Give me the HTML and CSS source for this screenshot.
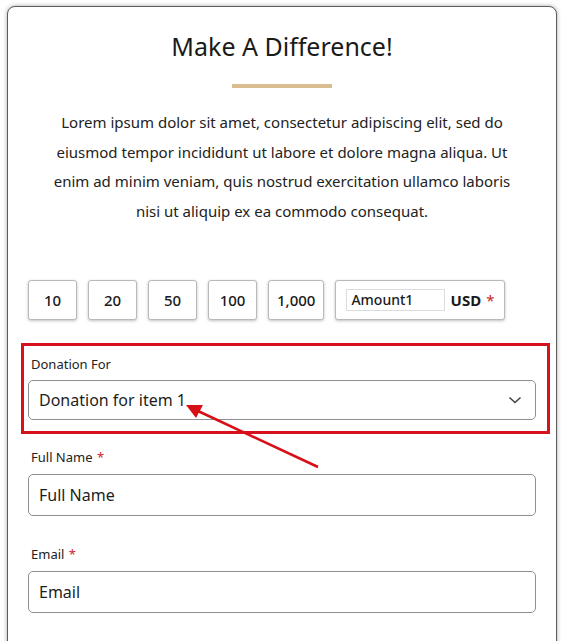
FILE: index.html
```html
<!DOCTYPE html>
<html lang="en">
<head>
<meta charset="utf-8">
<title>Make A Difference!</title>
<link rel="stylesheet" href="styles.css">
</head>
<body>
<div class="card">
  <h1 class="title">Make A Difference!</h1>
  <div class="divider"></div>
  <p class="intro">Lorem ipsum dolor sit amet, consectetur adipiscing elit, sed do eiusmod tempor incididunt ut labore et dolore magna aliqua. Ut enim ad minim veniam, quis nostrud exercitation ullamco laboris nisi ut aliquip ex ea commodo consequat.</p>

  <div class="amounts">
    <button class="amt">10</button>
    <button class="amt">20</button>
    <button class="amt">50</button>
    <button class="amt">100</button>
    <button class="amt">1,000</button>
    <div class="amt custom">
      <span class="amt-input">Amount1</span>
      <span class="cur">USD</span><span class="req">*</span>
    </div>
  </div>

  <div class="highlight">
    <label class="lbl">Donation For</label>
    <div class="field select">
      <span>Donation for item 1</span>
      <svg class="chev" width="14" height="8" viewBox="0 0 14 8"><path d="M1.5 1.5 L7 6.5 L12.5 1.5" fill="none" stroke="#444" stroke-width="1.6"/></svg>
    </div>
  </div>

  <div class="group first">
    <label class="lbl">Full Name <span class="req">*</span></label>
    <div class="field">Full Name</div>
  </div>

  <div class="group">
    <label class="lbl">Email <span class="req">*</span></label>
    <div class="field">Email</div>
  </div>

  <svg class="arrow" width="564" height="641" viewBox="0 0 564 641">
    <line x1="318" y1="467" x2="198" y2="411" stroke="#d90f17" stroke-width="2.6"/>
    <polygon points="186,405 203,405 196,418" fill="#d90f17"/>
  </svg>
</div>
</body>
</html>
```
FILE: styles.css
```css
html, body {
  margin: 0;
  padding: 0;
  background: #fff;
}
body {
  font-family: "Noto Sans", "Open Sans", sans-serif;
  color: #1e1e1e;
  overflow: hidden;
  height: 641px;
}
.card {
  margin: 6px 0 0 7px;
  width: 550px;
  min-height: 720px;
  box-sizing: border-box;
  border: 1px solid #5c5c5c;
  border-radius: 8px;
  box-shadow: 0 0 4px rgba(0,0,0,0.35);
  padding: 24px 20px 0 20px;
  background: #fff;
}
.title {
  margin: 0;
  font-size: 25px;
  line-height: 30px;
  font-weight: 400;
  text-align: center;
  color: #1a1a1a;
}
.divider {
  width: 100px;
  height: 4px;
  background: #d9bd8f;
  margin: 23px auto 0;
}
.intro {
  margin: 20px auto 0;
  max-width: 470px;
  font-size: 15px;
  line-height: 29.5px;
  text-align: center;
  color: #222;
}
.amounts {
  display: flex;
  gap: 11px;
  margin-top: 54px;
}
.amt {
  height: 40px;
  min-width: 49px;
  box-sizing: border-box;
  padding: 0 8px;
  border: 1px solid #b9b9b9;
  border-radius: 3px;
  background: #fff;
  box-shadow: 0 1px 3px rgba(0,0,0,0.25);
  font-family: inherit;
  font-size: 15px;
  font-weight: 500;
  color: #1a1a1a;
  display: flex;
  align-items: center;
  justify-content: center;
}
.custom {
  width: 170px;
  justify-content: flex-start;
  padding: 0 10px;
}
.amt-input {
  width: 100px;
  height: 22px;
  box-sizing: border-box;
  border: 1px solid #dcdcdc;
  padding: 0 4px;
  font-size: 14px;
  font-weight: 500;
  line-height: 20px;
  margin-right: 6px;
}
.cur {
  font-weight: 700;
}
.req {
  color: #d0222b;
  margin-left: 5px;
  font-weight: 400;
}
.lbl .req {
  margin-left: 1px;
}
.highlight {
  margin: 23px -14px 0 -7px;
  border: 3px solid #d6131c;
  padding: 9px 11px 11px 4px;
}
.highlight .field {
  margin-top: 7px;
}
.lbl {
  display: block;
  font-size: 13px;
  line-height: 18px;
  color: #222;
  padding-left: 3px;
}
.field {
  margin-top: 8px;
  height: 40px;
  box-sizing: border-box;
  border: 1px solid #8f8f8f;
  border-radius: 5px;
  padding: 0 10px;
  font-size: 16px;
  display: flex;
  align-items: center;
  color: #1e1e1e;
}
.group .field {
  height: 42px;
}
.select {
  justify-content: space-between;
}
.chev {
  margin-right: 3px;
}
.group.first {
  margin-top: 14px;
}
.group {
  margin-top: 29px;
}
.arrow {
  position: absolute;
  left: 0;
  top: 0;
  pointer-events: none;
}
```
